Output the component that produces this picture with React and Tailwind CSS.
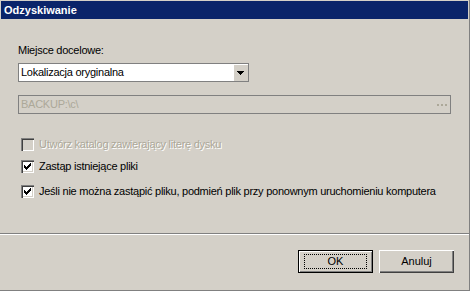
import React from 'react';

const CHECK = ['......#', '.....##', '#...###', '##.###.', '#####..', '.###...', '..#....'];

const CheckMark = ({ color }) => (
  <svg width="7" height="7" viewBox="0 0 7 7" shapeRendering="crispEdges" className="absolute left-[3px] top-[3px]">
    {CHECK.map((row, y) =>
      row.split('').map((c, x) => (c === '#' ? <rect key={`${x}-${y}`} x={x} y={y} width="1" height="1" fill={color} /> : null))
    )}
  </svg>
);

const Checkbox = ({ label, checked, disabled, className }) => (
  <div className={`flex items-center h-[16px] ${className}`}>
    <div
      className={`relative ml-[3px] w-[13px] h-[13px] shrink-0 shadow-[inset_1px_1px_0_#808080,inset_2px_2px_0_#404040,inset_-1px_-1px_0_#ffffff,inset_-2px_-2px_0_#d4d0c8] ${disabled ? 'bg-[#d4d0c8]' : 'bg-white'}`}
    >
      {checked && <CheckMark color="#000" />}
    </div>
    <span
      className={`ml-[5px] whitespace-nowrap leading-[16px] ${disabled ? 'text-[#aca899] [text-shadow:1px_1px_0_#ffffff]' : 'text-black'}`}
    >
      {label}
    </span>
  </div>
);

const Button = ({ children, isDefault }) => (
  <button
    className={`w-[75px] h-[23px] flex items-center justify-center bg-[#d4d0c8] text-black text-[11px] ${
      isDefault
        ? 'border border-black shadow-[inset_1px_1px_0_#ffffff,inset_-1px_-1px_0_#808080]'
        : 'shadow-[inset_1px_1px_0_#ffffff,inset_-1px_-1px_0_#404040,inset_-2px_-2px_0_#808080]'
    }`}
  >
    {isDefault ? (
      <span className="w-[63px] h-[15px] border border-dotted border-black flex items-center justify-center leading-none">
        {children}
      </span>
    ) : (
      children
    )}
  </button>
);

export default function App() {
  return (
    <div
      className="w-[470px] h-[291px] bg-[#d4d0c8] border-r border-b border-[#808080] flex flex-col text-[11px] text-black overflow-hidden"
      style={{ fontFamily: '"Liberation Sans", Arial, sans-serif' }}
    >
      {/* Title bar */}
      <div className="mx-[1px] mt-[1px] h-[18px] bg-[#0a246a] text-white font-bold flex items-center pl-[3px] leading-none">
        Odzyskiwanie
      </div>

      <div className="pl-[18px] pr-[18px] flex flex-col tracking-[-0.25px]">
        <div className="mt-[24px] h-[14px] leading-[14px]">Miejsce docelowe:</div>

        {/* Combobox */}
        <div className="mt-[6px] w-[231px] h-[19px] border border-[#808080] bg-white flex items-center">
          <span className="pl-[2px] flex-1 leading-[17px]">Lokalizacja oryginalna</span>
          <div className="w-[15px] h-[17px] bg-[#d4d0c8] shadow-[inset_1px_1px_0_#ffffff] flex items-center justify-center">
            <svg width="7" height="4" viewBox="0 0 7 4" shapeRendering="crispEdges">
              <rect x="0" y="0" width="7" height="1" fill="#000" />
              <rect x="1" y="1" width="5" height="1" fill="#000" />
              <rect x="2" y="2" width="3" height="1" fill="#000" />
              <rect x="3" y="3" width="1" height="1" fill="#000" />
            </svg>
          </div>
        </div>

        {/* Path field */}
        <div className="mt-[13px] w-[433px] h-[19px] border border-[#808080] bg-[#d4d0c8] flex items-center">
          <span className="pl-[2px] flex-1 text-[#aca899] leading-[17px]">{'BACKUP:\\c\\'}</span>
          <div className="flex gap-[2px] mr-[3px]">
            <span className="w-[2px] h-[2px] bg-[#aca899]" />
            <span className="w-[2px] h-[2px] bg-[#aca899]" />
            <span className="w-[2px] h-[2px] bg-[#aca899]" />
          </div>
        </div>

        <Checkbox className="mt-[22px]" label="Utwórz katalog zawierający literę dysku" disabled />
        <Checkbox className="mt-[6px]" label="Zastąp istniejące pliki" checked />
        <Checkbox className="mt-[9px]" label="Jeśli nie można zastąpić pliku, podmień plik przy ponownym uruchomieniu komputera" checked />
      </div>

      {/* Separator */}
      <div className="mt-[34px] h-[2px] border-t border-[#808080] border-b border-b-white" />

      <div className="mt-[15px] flex justify-end gap-[6px] pr-[15px]">
        <Button isDefault>OK</Button>
        <Button>Anuluj</Button>
      </div>
    </div>
  );
}
